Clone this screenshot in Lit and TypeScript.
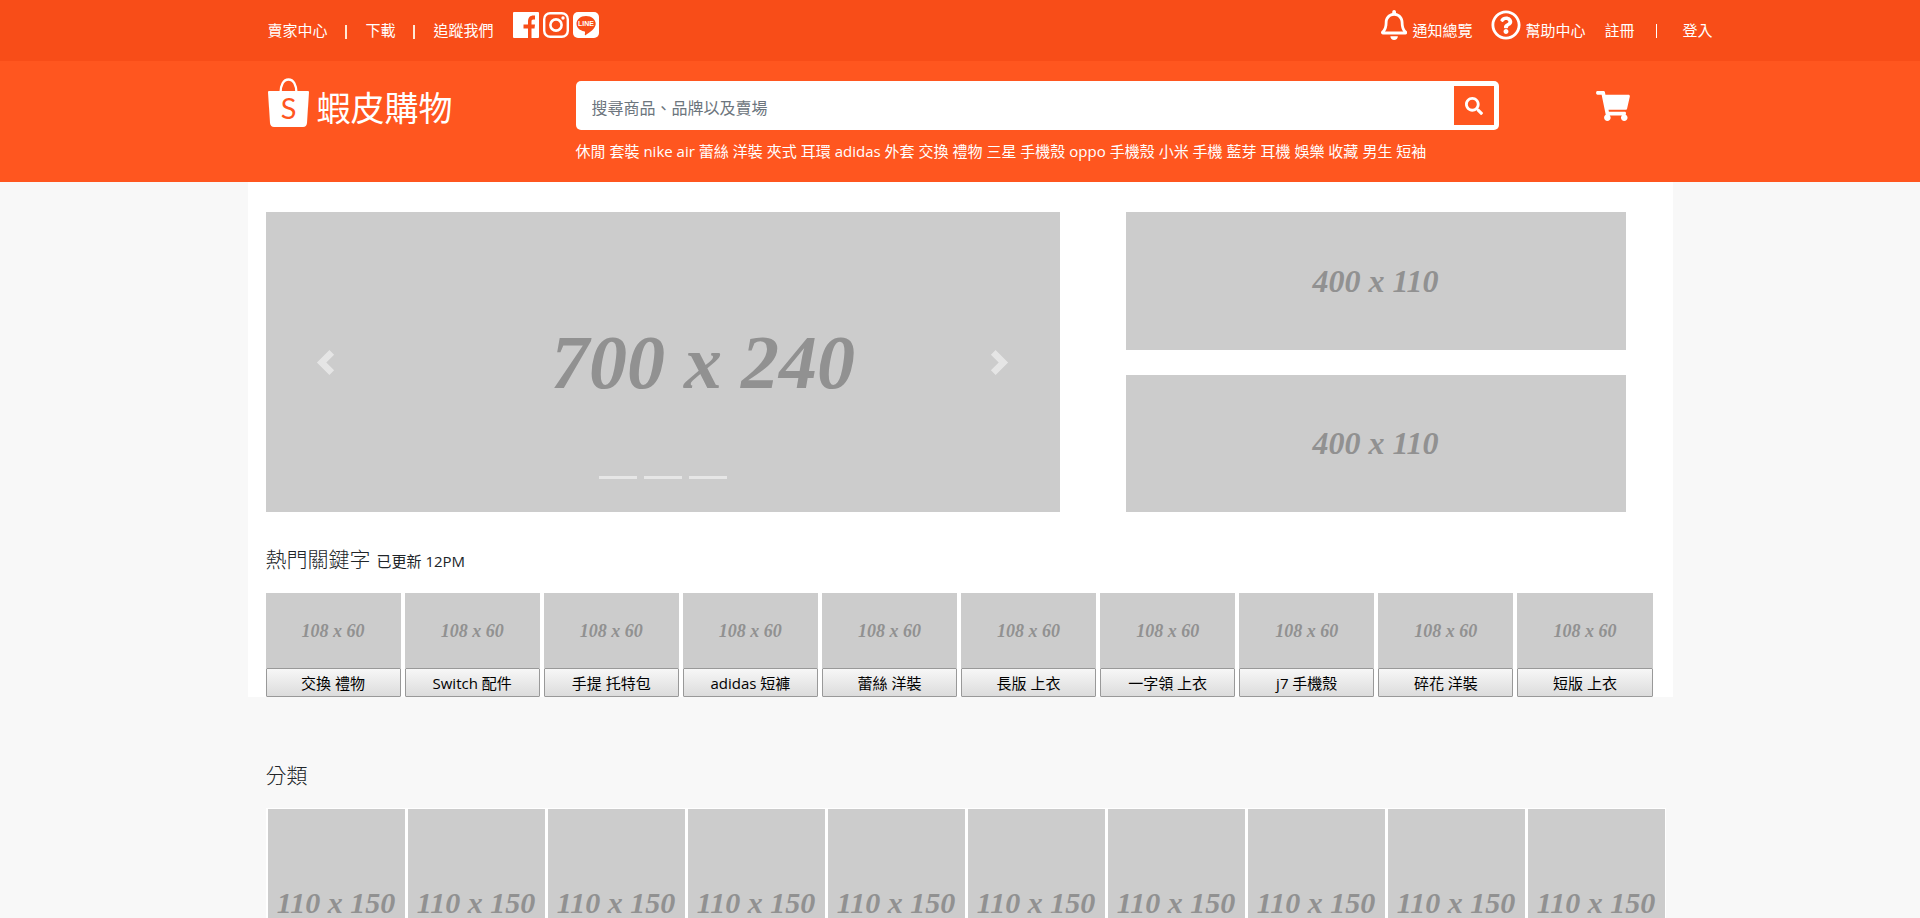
import { LitElement, html, css, svg } from "lit";
import { customElement, property } from "lit/decorators.js";

const KEYWORDS = [
  "休閒 套裝", "nike air", "蕾絲 洋裝", "夾式 耳環", "adidas 外套", "交換 禮物", "三星 手機殼",
  "oppo 手機殼", "小米 手機", "藍芽 耳機", "娛樂 收藏", "男生 短袖",
];

const HOT = [
  "交換 禮物", "Switch 配件", "手提 托特包", "adidas 短褲", "蕾絲 洋裝",
  "長版 上衣", "一字領 上衣", "j7 手機殼", "碎花 洋裝", "短版 上衣",
];

const CATEGORIES = Array.from({ length: 10 }, (_, i) => i + 1);

const bell = svg`<path d="M439.39 362.29c-19.32-20.76-55.47-51.99-55.47-154.29 0-77.7-54.48-139.9-127.94-155.16V32c0-17.67-14.32-32-31.98-32s-31.98 14.33-31.98 32v20.84C118.56 68.1 64.08 130.3 64.08 208c0 102.3-36.15 133.53-55.47 154.29-6 6.45-8.66 14.16-8.61 21.71.11 16.4 12.98 32 32.1 32h383.8c19.12 0 32-15.6 32.1-32 .05-7.55-2.61-15.27-8.61-21.71zM67.53 368c21.22-27.97 44.42-74.33 44.53-159.42 0-.2-.06-.38-.06-.58 0-61.86 50.14-112 112-112s112 50.14 112 112c0 .2-.06.38-.06.58.11 85.1 23.31 131.46 44.53 159.42H67.53zM224 512c35.32 0 63.97-28.65 63.97-64H160.03c0 35.35 28.65 64 63.97 64z"/>`;
const help = svg`<path d="M256 8C119.043 8 8 119.083 8 256c0 136.997 111.043 248 248 248s248-111.003 248-248C504 119.083 392.957 8 256 8zm0 448c-110.532 0-200-89.431-200-200 0-110.495 89.472-200 200-200 110.491 0 200 89.471 200 200 0 110.53-89.431 200-200 200zm107.244-255.2c0 67.052-72.421 68.084-72.421 92.863V300c0 6.627-5.373 12-12 12h-45.647c-6.627 0-12-5.373-12-12v-8.659c0-35.745 27.1-50.034 47.579-61.516 17.561-9.845 28.324-16.541 28.324-29.579 0-17.246-21.999-28.693-39.784-28.693-23.189 0-33.894 10.977-48.942 29.969-4.057 5.12-11.46 6.071-16.666 2.124l-27.824-21.098c-5.107-3.872-6.251-11.066-2.644-16.363C184.846 131.491 214.94 112 261.794 112c49.071 0 101.45 38.304 101.45 88.8zM298 368c0 23.159-18.841 42-42 42s-42-18.841-42-42 18.841-42 42-42 42 18.841 42 42z"/>`;
const magnifier = svg`<path d="M505 442.7L405.3 343c-4.5-4.5-10.6-7-17-7H372c27.6-35.3 44-79.7 44-128C416 93.1 322.9 0 208 0S0 93.1 0 208s93.1 208 208 208c48.3 0 92.7-16.4 128-44v16.3c0 6.4 2.5 12.5 7 17l99.7 99.7c9.4 9.4 24.6 9.4 33.9 0l28.3-28.3c9.4-9.4 9.4-24.6.1-34zM208 336c-70.7 0-128-57.2-128-128 0-70.7 57.2-128 128-128 70.7 0 128 57.2 128 128 0 70.7-57.2 128-128 128z"/>`;
const cart = svg`<path d="M528.12 301.319l47.273-208C578.806 78.301 567.391 64 551.99 64H159.208l-9.166-44.81C147.758 8.021 137.93 0 126.529 0H24C10.745 0 0 10.745 0 24v16c0 13.255 10.745 24 24 24h69.883l70.248 343.435C147.325 417.1 136 435.222 136 456c0 30.928 25.072 56 56 56s56-25.072 56-56c0-15.674-6.447-29.835-16.824-40h209.647C430.447 426.165 424 440.326 424 456c0 30.928 25.072 56 56 56s56-25.072 56-56c0-22.172-12.888-41.332-31.579-50.405l5.517-24.276c3.413-15.018-8.002-29.319-23.403-29.319H218.117l-6.545-32h293.145c11.206 0 20.92-7.754 23.403-18.681z"/>`;

/** Grey box that shows its own dimensions. */
@customElement("size-box")
export class SizeBox extends LitElement {
  @property() label = "";

  static styles = css`
    :host {
      display: flex;
      align-items: center;
      justify-content: center;
      overflow: hidden;
      background: #ccc;
      color: #919191;
      font-family: "Liberation Serif", serif;
      font-weight: 700;
      font-style: italic;
      line-height: 1;
      white-space: nowrap;
    }
  `;

  render() {
    return html`<span>${this.label}</span>`;
  }
}

@customElement("shop-topbar")
export class ShopTopbar extends LitElement {
  static styles = css`
    :host {
      display: block;
      background: #f84d18;
      color: #fff;
    }
    .inner {
      display: flex;
      justify-content: space-between;
      max-width: 1425px;
      height: 61px;
      margin: 0 auto;
      padding: 10px 0 0 20px;
      box-sizing: border-box;
    }
    .group {
      display: flex;
      align-items: flex-start;
      line-height: 20px;
    }
    .right {
      margin-right: -40px;
    }
    a {
      display: flex;
      color: inherit;
      text-decoration: none;
      white-space: nowrap;
    }
    .word {
      padding-top: 10px;
    }
    .bar {
      width: 2px;
      height: 14px;
      margin: 15px 19px 0 17px;
      background: #ffe9d6;
    }
    .thin {
      width: 1px;
      margin: 14px 25px 0 22px;
      background: #fff;
    }
    .social {
      display: flex;
      gap: 3px;
      margin: 2px 0 0 19px;
    }
    .social svg {
      display: block;
      width: 27px;
      height: 27px;
    }
    .notice {
      gap: 5px;
      margin-right: 19px;
    }
    .help {
      gap: 4px;
      margin-right: 19px;
    }
    .notice svg,
    .help svg {
      display: block;
      height: 30px;
      fill: #fff;
    }
    .tiny {
      font: 700 7px "Liberation Sans", sans-serif;
      fill: #fff;
    }
  `;

  render() {
    return html`
      <nav class="inner">
        <div class="group">
          <a class="word" href="#seller">賣家中心</a>
          <span class="bar"></span>
          <a class="word" href="#download">下載</a>
          <span class="bar"></span>
          <a class="word" href="#follow">追蹤我們</a>
          <div class="social">
            <a href="#facebook" aria-label="Facebook">
              <svg viewBox="0 0 27 27">
                <rect width="26" height="26" rx="1" fill="#fff" />
                <path
                  d="M15 26V16.500h-4.500v-4H15V10c0-4.500 2-6.500 5.500-6.500H22v4h-1.500c-1.800 0-2 .8-2 2.500v2.500H22l-.5 4h-3V26z"
                  fill="#f84d18"
                />
              </svg>
            </a>
            <a href="#instagram" aria-label="Instagram">
              <svg viewBox="0 0 27 27" fill="none" stroke="#fff">
                <rect x="1.200" y="1.200" width="23.600" height="23.600" rx="6" stroke-width="2.400" />
                <circle cx="13" cy="13" r="5.600" stroke-width="2.600" />
                <circle cx="20" cy="6" r="1.700" fill="#fff" stroke="none" />
              </svg>
            </a>
            <a href="#line" aria-label="LINE">
              <svg viewBox="0 0 27 27">
                <rect width="26" height="26" rx="5" fill="#fff" />
                <path
                  d="M13 4C7.500 4 3.500 7.400 3.500 11.800c0 3.900 3.500 6.900 7.500 7.500 1.300.3 1.200 1 .8 3.200 0 .7.400.8 1 .4 3.200-1.900 9.900-6 9.900-11.100C22.700 7.400 18.500 4 13 4z"
                  fill="#f84d18"
                />
                <text class="tiny" x="13" y="14" text-anchor="middle">LINE</text>
              </svg>
            </a>
          </div>
        </div>
        <div class="group right">
          <a class="notice" href="#notice">
            <svg viewBox="0 0 448 512">${bell}</svg>
            <span class="word">通知總覽</span>
          </a>
          <a class="help" href="#help">
            <svg viewBox="0 0 512 512">${help}</svg>
            <span class="word">幫助中心</span>
          </a>
          <a class="word" href="#signup">註冊</a>
          <span class="bar thin"></span>
          <a class="word" href="#login">登入</a>
        </div>
      </nav>
    `;
  }
}

@customElement("shop-header")
export class ShopHeader extends LitElement {
  static styles = css`
    :host {
      display: block;
      background: #ff561f;
      color: #fff;
    }
    .inner {
      display: grid;
      grid-template-columns: 308px minmax(0, 1fr) 174px;
      max-width: 1425px;
      height: 121px;
      margin: 0 auto;
      padding-left: 20px;
      box-sizing: border-box;
    }
    a {
      color: inherit;
      text-decoration: none;
    }
    .logo {
      display: flex;
      gap: 8px;
      padding-top: 17px;
      align-self: start;
      font-size: 34px;
      line-height: 60px;
    }
    .logo svg {
      display: block;
      width: 41px;
      height: 50px;
    }
    .mark {
      font: 400 29px Lato, sans-serif;
      fill: #ff561f;
    }
    .search {
      display: flex;
      height: 49px;
      margin-top: 20px;
      padding: 5px;
      box-sizing: border-box;
      border-radius: 5px;
      background: #fff;
    }
    input {
      flex: 1;
      min-width: 0;
      padding: 4px 11px 0;
      border: 0;
      outline: 0;
      background: none;
      color: #495057;
      font: inherit;
      font-size: 16px;
    }
    input::placeholder {
      color: #6c757d;
      opacity: 1;
    }
    button {
      display: grid;
      place-items: center;
      width: 40px;
      padding: 0;
      border: 0;
      background: #ff561f;
    }
    button svg {
      width: 18px;
      height: 18px;
      fill: #fff;
    }
    .words {
      display: flex;
      flex-wrap: wrap;
      gap: 0 4px;
      margin-top: 11px;
      line-height: 20px;
    }
    .cart {
      padding: 30px 0 0 97px;
    }
    .cart svg {
      display: block;
      width: 34px;
      height: 30px;
      fill: #fff;
    }
  `;

  render() {
    return html`
      <div class="inner">
        <a class="logo" href="#home">
          <svg viewBox="0 0 41 50" aria-hidden="true">
            <path
              d="M12.500 15C12.500 7 15.500 1.500 20.500 1.500S28.500 7 28.500 15"
              fill="none"
              stroke="#fff"
              stroke-width="2.400"
            />
            <path d="M1 13h39q1 0 1 1l-2 31q-.4 4-4 4H6q-3.500 0-4-4L0 14q0-1 1-1z" fill="#fff" />
            <text class="mark" x="20.500" y="41" text-anchor="middle">S</text>
          </svg>
          <span>蝦皮購物</span>
        </a>
        <div>
          <form class="search" role="search" @submit=${(e: Event) => e.preventDefault()}>
            <input type="text" aria-label="搜尋" placeholder="搜尋商品、品牌以及賣場" />
            <button type="submit" aria-label="搜尋">
              <svg viewBox="0 0 512 512">${magnifier}</svg>
            </button>
          </form>
          <div class="words">${KEYWORDS.map((k) => html`<a href="#search">${k}</a>`)}</div>
        </div>
        <a class="cart" href="#cart" aria-label="購物車">
          <svg viewBox="0 0 576 512">${cart}</svg>
        </a>
      </div>
    `;
  }
}

@customElement("shop-carousel")
export class ShopCarousel extends LitElement {
  static styles = css`
    :host {
      display: block;
      position: relative;
      overflow: hidden;
      height: 300px;
    }
    .slide {
      width: 875px;
      height: 300px;
      font-size: 76px;
    }
    .control {
      position: absolute;
      top: 0;
      bottom: 0;
      width: 15%;
      display: grid;
      place-items: center;
      padding: 0;
      border: 0;
      background: none;
      opacity: 0.5;
    }
    .prev {
      left: 0;
    }
    .next {
      right: 0;
    }
    .control svg {
      width: 25px;
      height: 25px;
      fill: #fff;
    }
    .dots {
      position: absolute;
      left: 0;
      right: 0;
      bottom: 33px;
      display: flex;
      justify-content: center;
      gap: 7px;
    }
    .dot {
      width: 38px;
      height: 3px;
      padding: 0;
      border: 0;
      background: #fff;
      opacity: 0.5;
    }
  `;

  render() {
    return html`
      <size-box class="slide" label="700 x 240"></size-box>
      <button class="control prev" aria-label="Previous">
        <svg viewBox="0 0 8 8"><path d="M5.250 0l-4 4 4 4 1.500-1.500-2.500-2.500 2.500-2.500-1.500-1.500z" /></svg>
      </button>
      <button class="control next" aria-label="Next">
        <svg viewBox="0 0 8 8"><path d="M2.750 0l-1.500 1.500 2.500 2.500-2.500 2.500 1.500 1.500 4-4-4-4z" /></svg>
      </button>
      <div class="dots">
        ${[1, 2, 3].map((n) => html`<button class="dot" aria-label="Slide ${n}"></button>`)}
      </div>
    `;
  }
}

@customElement("app-root")
export class AppRoot extends LitElement {
  static styles = css`
    :host {
      display: block;
      min-height: 100vh;
      background: #f8f8f8;
      color: #212529;
      font-family: "Open Sans", "Noto Sans CJK TC", sans-serif;
      font-size: 15px;
      line-height: 20px;
    }
    .panel,
    .section {
      max-width: 1425px;
      margin: 0 auto;
      box-sizing: border-box;
    }
    .panel {
      padding: 30px 20px 0 18px;
      background: #fff;
    }
    .section {
      padding: 62px 7px 0 18px;
    }
    .banners {
      display: grid;
      grid-template-columns: minmax(0, 794fr) minmax(0, 500fr);
      column-gap: 66px;
      padding-right: 27px;
    }
    .side {
      display: grid;
      grid-template-rows: 1fr 1fr;
      row-gap: 25px;
      font-size: 32px;
    }
    h2 {
      display: flex;
      align-items: baseline;
      gap: 6px;
      margin: 0;
      font-size: 21px;
      font-weight: 300;
      line-height: 32px;
    }
    .hot-title {
      padding: 31px 0 16px;
    }
    .cat-title {
      padding-bottom: 17px;
    }
    small {
      font-size: 15px;
      font-weight: 400;
    }
    .hot {
      display: grid;
      grid-template-columns: repeat(10, minmax(0, 1fr));
      gap: 4px;
    }
    .hot-item {
      display: flex;
      flex-direction: column;
    }
    .hot-box {
      height: 75px;
      font-size: 18px;
    }
    .hot-item button {
      height: 29px;
      padding: 0;
      border: 1px solid #999;
      border-radius: 1px;
      background: linear-gradient(#f7f7f7, #dcdcdc);
      color: #000;
      font: inherit;
      line-height: 20px;
      white-space: nowrap;
    }
    .cats {
      display: grid;
      grid-template-columns: repeat(10, minmax(0, 1fr));
      gap: 3px;
      padding: 1px 1px 1px 2px;
      background: #fff;
    }
    .cat-box {
      height: 187px;
      font-size: 30px;
    }
  `;

  render() {
    return html`
      <shop-topbar></shop-topbar>
      <shop-header></shop-header>
      <main>
        <section class="panel">
          <div class="banners">
            <shop-carousel></shop-carousel>
            <div class="side">
              <size-box label="400 x 110"></size-box>
              <size-box label="400 x 110"></size-box>
            </div>
          </div>
          <h2 class="hot-title">熱門關鍵字 <small>已更新 12PM</small></h2>
          <div class="hot">
            ${HOT.map(
              (name) => html`
                <div class="hot-item">
                  <size-box class="hot-box" label="108 x 60"></size-box>
                  <button type="button">${name}</button>
                </div>
              `,
            )}
          </div>
        </section>
        <section class="section">
          <h2 class="cat-title">分類</h2>
          <div class="cats">
            ${CATEGORIES.map(() => html`<size-box class="cat-box" label="110 x 150"></size-box>`)}
          </div>
        </section>
      </main>
    `;
  }
}
